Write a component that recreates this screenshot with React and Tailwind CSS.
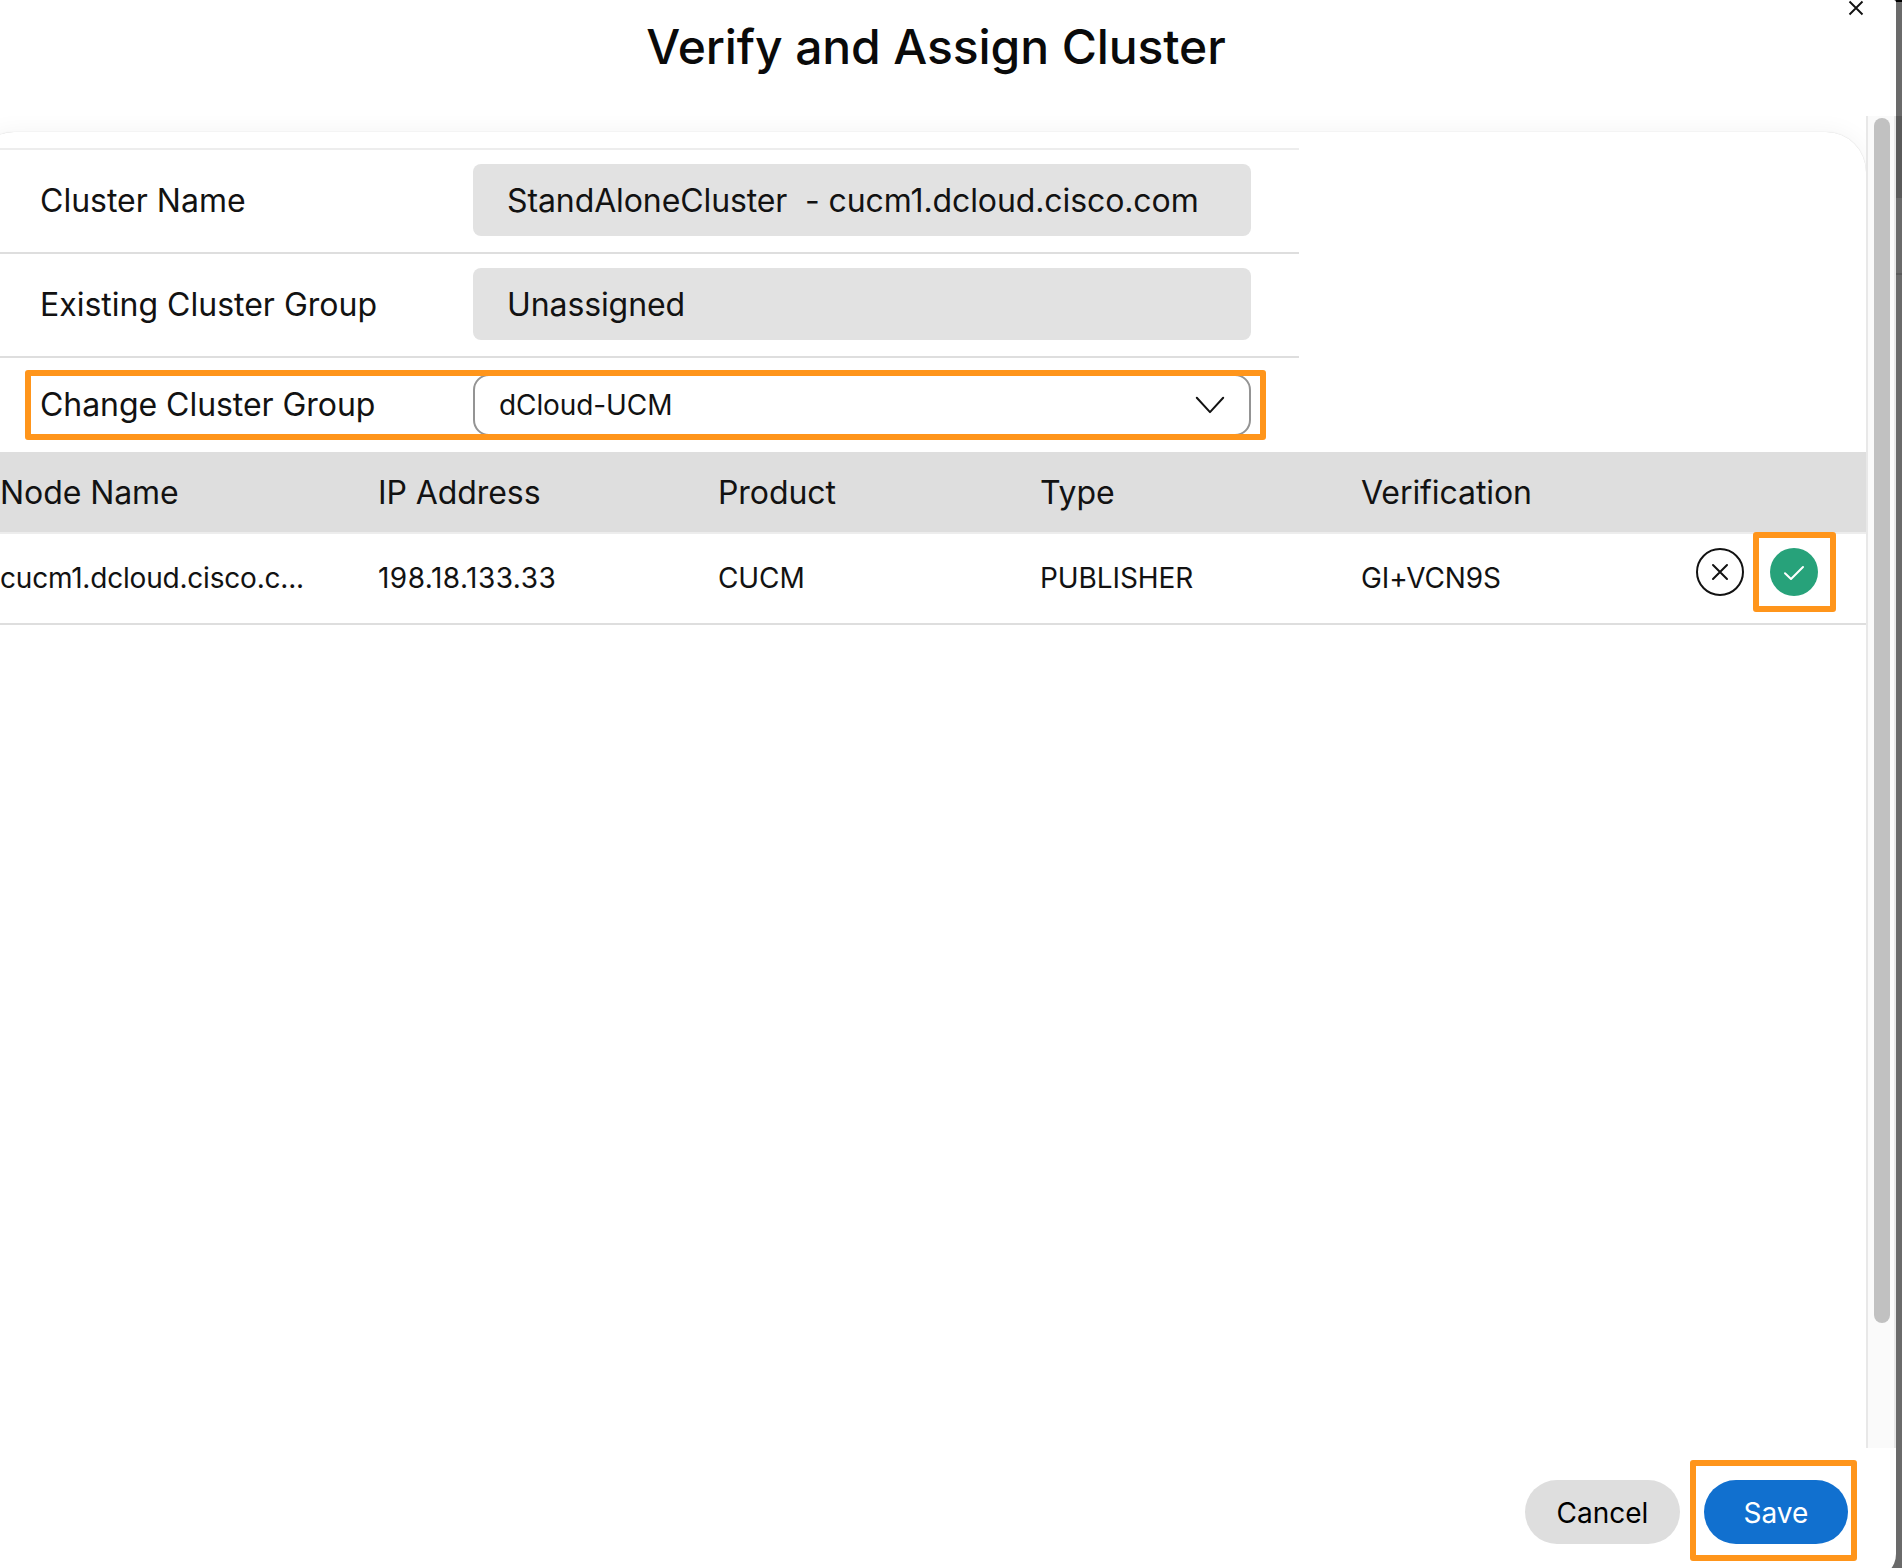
const columns = "grid grid-cols-[378px_340px_322px_321px_1fr] items-center";

function InfoRow({ label, value }) {
  return (
    <div className="flex h-[104px] items-center border-b-2 border-[#dedede]">
      <div className="w-[433px] text-[32px] leading-[40px]">{label}</div>
      <div className="-mt-0.5 flex h-[72px] w-[778px] items-center rounded-[8px] bg-[#e2e2e2] px-[34px] text-[32px] tracking-[-0.1px] whitespace-pre">
        <span className="mt-0.5">{value}</span>
      </div>
    </div>
  );
}

export default function App() {
  return (
    <div
      className="relative flex h-[1568px] w-[1902px] overflow-hidden bg-[#6a6a6a] text-[#121212]"
      style={{ fontFamily: 'Inter, sans-serif' }}
    >
      <div className="absolute right-0 top-0 h-0.5 w-2 bg-black" />
      <div className="absolute right-0 top-[116px] h-[82px] w-1.5 bg-[#5a5a5a]" />
      <div className="absolute right-0 top-[273px] h-0.5 w-1.5 bg-[#5a5a5a]" />

      <main className="relative flex h-[1578px] w-[1896px] flex-col rounded-tr-[2px] rounded-br-[24px] bg-white">
        <header className="relative flex h-[116px] shrink-0 justify-center">
          <h1 className="mt-[18px] mr-[24px] text-[48px] font-medium leading-[58px] tracking-[-0.1px] text-[#0a0a0a]">
            Verify and Assign Cluster
          </h1>
          <svg className="absolute left-[1848px] top-0 size-4" viewBox="0 0 16 16" fill="none" stroke="#121212" strokeWidth="1.9">
            <path d="M1.5 1.5 14.5 14.5M14.5 1.5 1.5 14.5" />
          </svg>
        </header>

        <div className="flex h-[1332px] shrink-0">
          <section className="w-[1866px] overflow-hidden pt-4">
            <div className="-ml-[26px] h-[1400px] w-[1892px] rounded-[40px] bg-white pt-4 pl-[26px] shadow-[0_0_24px_rgba(0,0,0,0.05),0_0_1px_rgba(0,0,0,0.2)]">
              <div className="-ml-[26px] w-[1325px] border-t-2 border-[#ededed] pl-[26px]">
                <div className="-ml-[26px] [&>div]:pl-[66px]">
                  <InfoRow label="Cluster Name" value="StandAloneCluster  - cucm1.dcloud.cisco.com" />
                  <InfoRow label="Existing Cluster Group" value="Unassigned" />
                </div>
              </div>
              <div className="relative flex h-[94px] items-center pl-10">
                <div className="w-[433px] text-[32px] leading-[40px] tracking-[-0.05px]">Change Cluster Group</div>
                <div className="flex h-[62px] w-[778px] items-center justify-between rounded-[16px] border-2 border-[#949494] bg-white pl-6 pr-6 text-[28px] tracking-[-0.1px]">
                  <span>dCloud-UCM</span>
                  <svg className="h-5 w-[30px]" viewBox="0 0 30 20" fill="none" stroke="#121212" strokeWidth="2" strokeLinecap="round" strokeLinejoin="round">
                    <path d="M1.8 2.7 15 17.1 28.2 2.7" />
                  </svg>
                </div>
                <div className="absolute left-[25px] top-[12px] h-[70px] w-[1241px] rounded-[3px] border-6 border-[#ff951b]" />
              </div>

              <div className={columns + " -ml-[26px] h-[82px] border-b-2 border-[#ededed] bg-[#dedede] pt-0.5 pl-[26px] text-[32px] tracking-[-0.08px]"}>
                <span>Node Name</span>
                <span>IP Address</span>
                <span>Product</span>
                <span>Type</span>
                <span>Verification</span>
              </div>
              <div className={columns + " -ml-[26px] h-[91px] border-b-2 border-[#dedede] pb-0.5 pl-[26px] text-[28px] tracking-[-0.1px]"}>
                <span className="tracking-[-0.2px]">cucm1.dcloud.cisco.c...</span>
                <span className="tracking-[0.47px]">198.18.133.33</span>
                <span>CUCM</span>
                <span>PUBLISHER</span>
                <div className="flex items-center justify-between pr-12">
                  <span>GI+VCN9S</span>
                  <div className="-mt-[11px] flex gap-[26px]">
                    <svg className="size-12" viewBox="0 0 48 48" fill="none" stroke="#121212" strokeWidth="2">
                      <circle cx="24" cy="24" r="23" />
                      <path d="M17 17 31 31M31 17 17 31" strokeLinecap="round" />
                    </svg>
                    <div className="relative size-12">
                      <svg className="size-12" viewBox="0 0 48 48" fill="none">
                        <circle cx="24" cy="24" r="24" fill="#27a27a" />
                        <path d="M15 25.2 21 31 33 19" stroke="#fff" strokeWidth="2" strokeLinecap="round" strokeLinejoin="round" />
                      </svg>
                      <div className="absolute -left-[17px] -top-4 h-[80px] w-[83px] rounded-[3px] border-6 border-[#ff951b]" />
                    </div>
                  </div>
                </div>
              </div>
            </div>
          </section>
          <div className="w-[30px] border-x-2 border-[#e8e8e8] bg-[#fafafa] pl-1.5 pt-0.5">
            <div className="h-[1205px] w-4 rounded-full bg-[#c1c1c1]" />
          </div>
        </div>

        <footer className="flex items-start justify-end gap-6 pr-12 pt-8 text-[28px]">
          <button className="h-16 w-[155px] rounded-full bg-[#dedede] pt-0.5 text-black">Cancel</button>
          <div className="relative">
            <button className="h-16 w-36 rounded-full bg-[#1170cf] pt-0.5 text-white">Save</button>
            <div className="absolute -left-3.5 -top-5 h-[101px] w-[167px] rounded-[3px] border-6 border-[#ff951b]" />
          </div>
        </footer>
      </main>
    </div>
  );
}
